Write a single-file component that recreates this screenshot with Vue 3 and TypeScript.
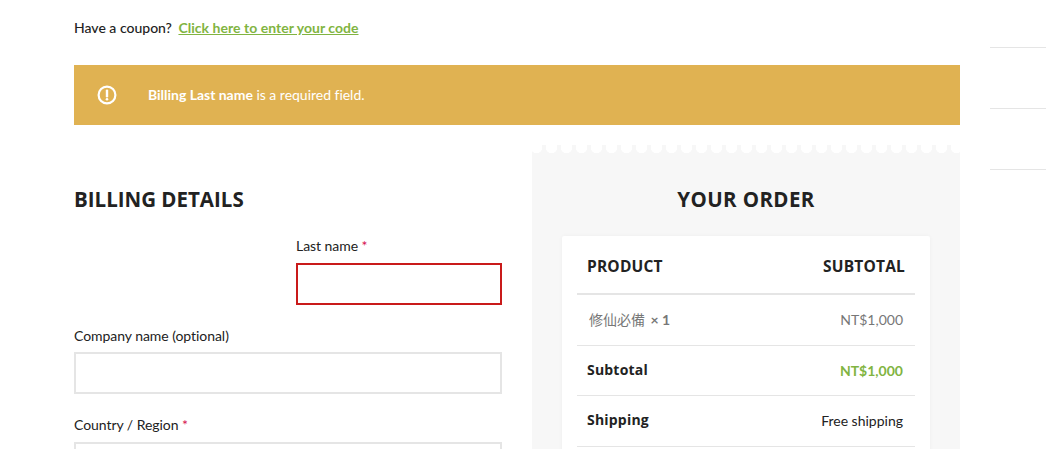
<script setup lang="ts">
interface OrderRow {
  label: string;
  value: string;
  kind: string;
}

const rows: OrderRow[] = [
  { label: 'Subtotal', value: 'NT$1,000', kind: 'green' },
  { label: 'Shipping', value: 'Free shipping', kind: 'dark' },
];
</script>

<template>
  <div class="page">
    <main class="main">
      <p class="coupon">
        Have a coupon?
        <a href="#" class="coupon-link">Click here to enter your code</a>
      </p>

      <div class="alert">
        <svg class="alert-icon" width="20" height="20" viewBox="0 0 20 20" fill="none">
          <circle cx="10" cy="10" r="8.4" stroke="#fff" stroke-width="2.2" />
          <path d="M10 5.6v5.6" stroke="#fff" stroke-width="2.4" stroke-linecap="round" />
          <circle cx="10" cy="14.2" r="1.3" fill="#fff" />
        </svg>
        <span class="alert-text"><b>Billing Last name</b> is a required field.</span>
      </div>

      <div class="columns">
        <section class="billing">
          <h2 class="title">BILLING DETAILS</h2>
          <div class="name-row">
            <div class="field last-name">
              <label>Last name <i class="req">*</i></label>
              <input class="input invalid" type="text" />
            </div>
          </div>
          <div class="field tight">
            <label>Company name (optional)</label>
            <input class="input" type="text" />
          </div>
          <div class="field">
            <label>Country / Region <i class="req">*</i></label>
            <input class="input" type="text" />
          </div>
        </section>

        <section class="order">
          <div class="scallops"></div>
          <h2 class="title centered">YOUR ORDER</h2>
          <div class="card">
            <div class="row head">
              <span>PRODUCT</span>
              <span>SUBTOTAL</span>
            </div>
            <div class="row item">
              <span>修仙必備 <b class="qty">× 1</b></span>
              <span>NT$1,000</span>
            </div>
            <div v-for="row in rows" :key="row.label" class="row total">
              <span class="total-label">{{ row.label }}</span>
              <span :class="row.kind">{{ row.value }}</span>
            </div>
          </div>
        </section>
      </div>
    </main>

    <aside class="side">
      <div class="side-line"></div>
      <div class="side-line"></div>
      <div class="side-line"></div>
    </aside>
  </div>
</template>

<style>
html,
body {
  margin: 0;
  background: #fff;
  overflow: hidden;
}
</style>

<style scoped>
.page {
  display: flex;
  height: 449px;
  overflow: hidden;
  padding-left: 74px;
  font-family: Lato, 'Noto Sans CJK TC', sans-serif;
  font-size: 14px;
  color: #222;
}

.main {
  width: 886px;
  flex: none;
}

.coupon {
  margin: 0;
  padding-top: 19px;
  height: 65px;
  box-sizing: border-box;
  line-height: 18px;
  font-weight: 500;
}

.coupon-link {
  margin-left: 3px;
  color: #81b441;
  font-weight: 700;
  letter-spacing: 0.03px;
  text-decoration: underline;
}

.alert {
  display: flex;
  align-items: center;
  height: 60px;
  padding-left: 23px;
  background: #e0b252;
  color: #fff;
}

.alert-icon {
  margin-right: 31px;
}

.alert-text {
  padding-bottom: 1px;
  letter-spacing: -0.02px;
}

.columns {
  display: flex;
  gap: 30px;
  margin-top: 20px;
}

.billing,
.order {
  width: 428px;
}

.billing {
  padding-top: 8px;
}

.title {
  margin: 0;
  font-family: 'Open Sans', sans-serif;
  font-size: 20.5px;
  font-weight: 700;
  line-height: 36px;
  color: #222;
}

.billing .title {
  margin-top: 28px;
}

.centered {
  text-align: center;
  margin-top: 28px;
  letter-spacing: 0.4px;
}

.name-row {
  display: flex;
  justify-content: flex-end;
  margin-top: 19px;
}

.last-name {
  width: 206px;
}

.field {
  margin-bottom: 21px;
}

.field label {
  display: block;
  line-height: 20px;
  margin-bottom: 7px;
  letter-spacing: -0.05px;
}

.tight label {
  margin-bottom: 6px;
}

.req {
  color: #d6134f;
  font-style: normal;
}

.input {
  display: block;
  width: 100%;
  height: 42px;
  box-sizing: border-box;
  border: 2px solid #e5e5e5;
  background: #fff;
  outline: none;
}

.invalid {
  border-color: #c91a1a;
}

.order {
  background: #f7f7f7;
  height: 400px;
}

.scallops {
  height: 8px;
  background-image: radial-gradient(circle at 50% 2.5px, #fff 5.4px, transparent 6px);
  background-size: 15px 8px;
  background-position: -3px 0;
}

.card {
  margin: 19px 30px 0;
  padding: 0 15px;
  min-height: 300px;
  background: #fff;
  border-radius: 2px;
  box-shadow: 0 0 4px rgba(0, 0, 0, 0.04);
}

.row {
  display: flex;
  justify-content: space-between;
  align-items: center;
  padding: 0 12px;
  border-bottom: 1px solid #e5e5e5;
}

.head {
  height: 55px;
  padding: 2px 10px 0;
  border-bottom-width: 2px;
  font-family: 'Open Sans', sans-serif;
  font-size: 15.5px;
  font-weight: 700;
  letter-spacing: 0.2px;
  color: #222;
}

.item {
  height: 51px;
  padding-bottom: 2px;
  box-sizing: border-box;
  color: #777;
}

.qty {
  margin-left: 2px;
}

.total {
  height: 50px;
  box-sizing: border-box;
  padding-left: 10px;
}

.total:last-child {
  height: 51px;
  padding-bottom: 1px;
}

.total-label {
  font-family: 'Open Sans', sans-serif;
  font-size: 14px;
  font-weight: 700;
  letter-spacing: 0.2px;
  padding-bottom: 2px;
}

.green {
  color: #81b441;
  font-weight: 700;
}

.dark {
  color: #222;
}

.side {
  width: 56px;
  margin-left: 30px;
  flex: none;
}

.side-line {
  height: 61px;
  box-sizing: border-box;
  border-bottom: 1px solid #e5e5e5;
}

.side-line:first-child {
  height: 48px;
}
</style>
